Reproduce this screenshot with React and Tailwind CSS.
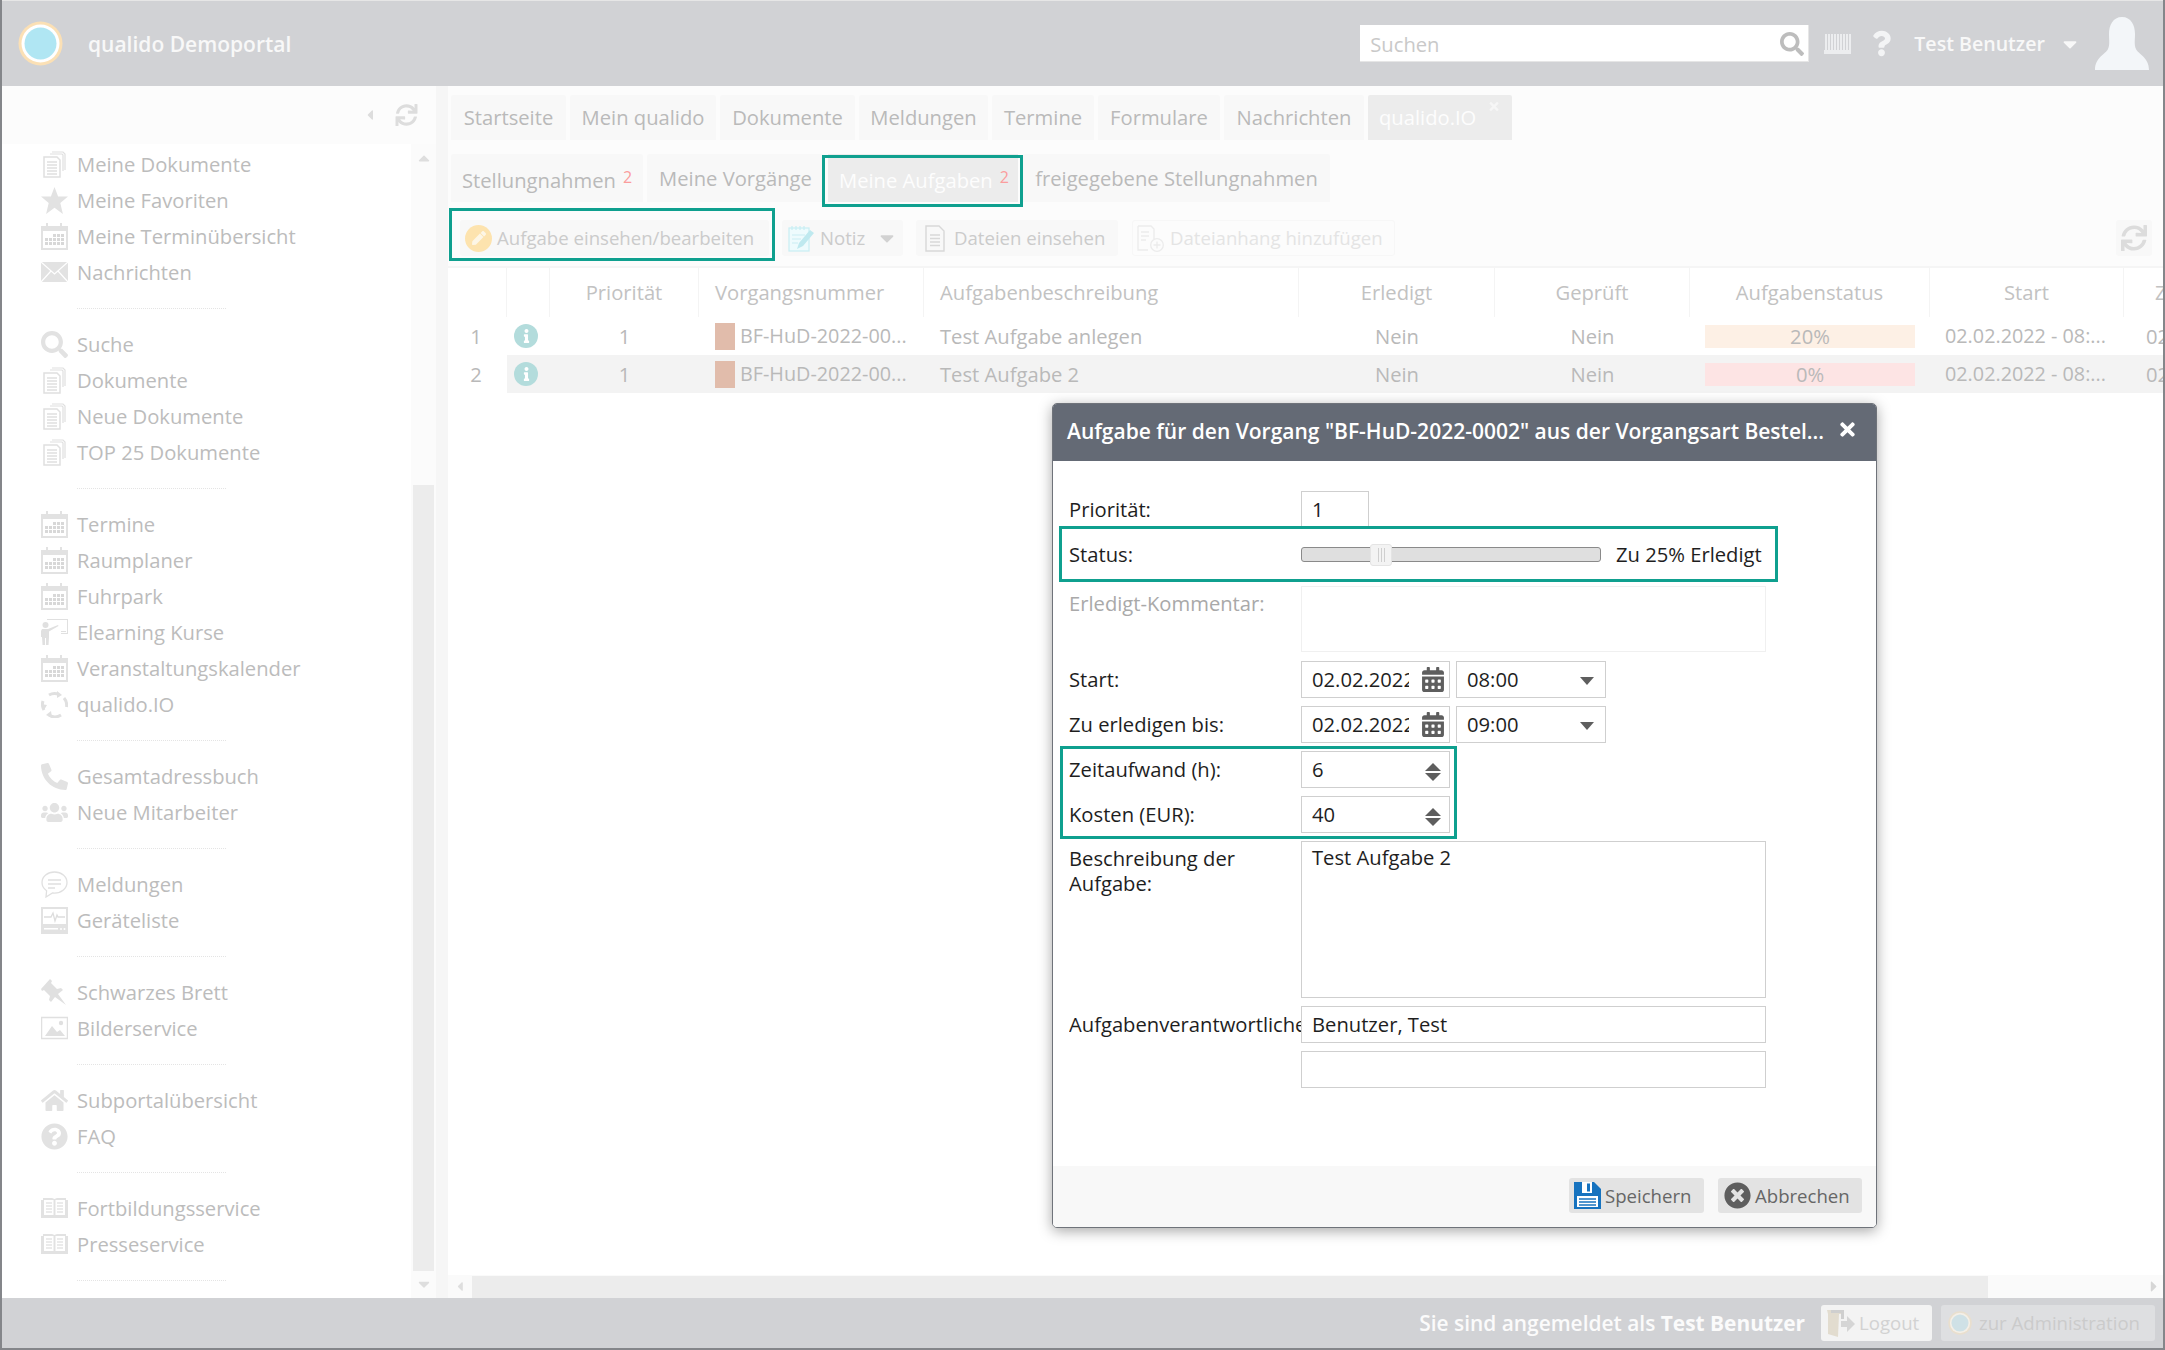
import React from 'react';
import { FaSearch, FaPhone, FaUsers, FaHome, FaQuestionCircle, FaSync, FaTimes, FaCaretDown, FaCaretUp, FaCaretLeft, FaCaretRight, FaTimesCircle, FaQuestion, FaInfo, FaPen, FaCalendarAlt } from 'react-icons/fa';

const DocIcon = () => (
  <svg viewBox="0 0 27 27" className="w-[27px] h-[27px]" fill="none" stroke="#e0e0e0" strokeWidth="1.2">
    <path d="M9 3h12l1 1v16M11 1h11l2 2v16" />
    <path d="M3 6h13l3 3v17H3z" fill="#fff" strokeWidth="1.5" />
    <path d="M6 11h10M6 14h10M6 17h10M6 20h10M6 23h10" strokeWidth="1.3" />
  </svg>
);
const StarIcon = () => (
  <svg viewBox="0 0 27 27" className="w-[27px] h-[27px]" fill="#e2e2e2">
    <path d="M13.5 0l3.6 9.6H27l-7.7 6.4 2.6 11-8.4-6.3L5.1 27l2.6-11L0 9.6h9.9z" />
  </svg>
);
const CalIcon = () => (
  <svg viewBox="0 0 27 27" className="w-[27px] h-[27px]">
    <path d="M0 3h5V0h2v3h12V0h2v3h6v24H0z" fill="#e2e2e2" />
    <rect x="2" y="8" width="23" height="17" fill="#fff" />
    {[0, 1, 2].map((r) => [0, 1, 2, 3, 4].map((k) => (k > 1 || r > 0) && <rect key={r + '-' + k} x={4 + k * 4} y={11 + r * 4} width="3" height="3" fill="#d8d8d8" />))}
  </svg>
);
const MailIcon = () => (
  <svg viewBox="0 0 27 27" className="w-[27px] h-[27px]">
    <rect y="3" width="27" height="20" fill="#e2e2e2" />
    <path d="M0 3l13.5 12L27 3M0 23l10-11M27 23L17 12" stroke="#fff" strokeWidth="1.2" fill="none" />
  </svg>
);
const TeachIcon = () => (
  <svg viewBox="0 0 27 27" className="w-[27px] h-[27px]" fill="#e0e0e0">
    <path d="M6 0h21v15h-7v-1h6V1H6z" />
    <circle cx="4.5" cy="6" r="3" />
    <path d="M1 10h6l10-4 .5 1L8 12.5V18l-.5 8H5v-7H4v7H1.5L1 18H0v-6z" />
    <rect x="20" y="12" width="5" height="1" />
  </svg>
);
const LoopIcon = () => (
  <svg viewBox="0 0 27 27" className="w-[27px] h-[27px]" fill="none" stroke="#e0e0e0" strokeWidth="3">
    <path d="M8 4a11 11 0 0 1 10-.5" />
    <path d="M23 7a11 11 0 0 1 2.5 9" />
    <path d="M20 24a11 11 0 0 1-12 0" />
    <path d="M3 19a11 11 0 0 1-1-9" />
    <path d="M16 0l5 4-5 3z" fill="#e0e0e0" stroke="none" />
    <path d="M11 27l-6-3 5-4z" fill="#e0e0e0" stroke="none" />
    <path d="M0 13l3 6 3-5z" fill="#e0e0e0" stroke="none" />
  </svg>
);
const BubbleIcon = () => (
  <svg viewBox="0 0 27 27" className="w-[27px] h-[27px]" fill="none" stroke="#e0e0e0" strokeWidth="1.3">
    <path d="M13.5 1C6.5 1 1 5.6 1 11.5c0 3.4 1.8 6.3 4.6 8.2L5 26l6.5-4c.7.1 1.3.1 2 .1C20.5 22 26 17.4 26 11.5S20.5 1 13.5 1z" />
    <path d="M7 9h13M7 13h13M7 17h7" strokeWidth="1.6" />
  </svg>
);
const DeviceIcon = () => (
  <svg viewBox="0 0 27 27" className="w-[27px] h-[27px]">
    <path d="M0 0h27v27H0z" fill="#e2e2e2" />
    <rect x="2" y="2" width="23" height="15" fill="#fff" />
    <path d="M3 10h7l2-4 2 8 2-6 1 2h7" stroke="#ddd" strokeWidth="1.3" fill="none" />
    <rect x="3" y="21" width="14" height="1.5" fill="#fff" />
    <circle cx="20" cy="22" r="1" fill="#fff" />
    <circle cx="23.5" cy="22" r="1" fill="#fff" />
  </svg>
);
const ImageIcon = () => (
  <svg viewBox="0 0 27 27" className="w-[27px] h-[27px]">
    <rect x="0.5" y="2.5" width="26" height="21" fill="#fff" stroke="#e0e0e0" strokeWidth="1.5" />
    <path d="M4 21l7-10 5 6 3-2 5 6z" fill="#e0e0e0" />
    <circle cx="20" cy="8" r="2.2" fill="#e0e0e0" />
  </svg>
);
const BookIcon = () => (
  <svg viewBox="0 0 27 27" className="w-[27px] h-[27px]">
    <path d="M0 5h2V3h9l2.5 1L16 3h9v2h2v18H0z" fill="#e2e2e2" />
    <rect x="3" y="5" width="9.5" height="15" fill="#fff" />
    <rect x="14.5" y="5" width="9.5" height="15" fill="#fff" />
    <path d="M5 8h6M5 11h6M5 14h6M5 17h6M16 8h6M16 11h6M16 14h6M16 17h6" stroke="#d8d8d8" strokeWidth="1.2" />
  </svg>
);
const PinIcon = () => (
  <svg viewBox="0 0 27 27" className="w-[27px] h-[27px]" fill="#e0e0e0">
    <path d="M9 0l2 2-1 2 6 6 4-1 2 2-5 4 8 11-11-8-4 5-2-2 1-4-6-6-2 1-1-2z" />
  </svg>
);
const fa = (I, cls = '') => () => <I className={'w-[27px] h-[27px] text-[#e2e2e2] ' + cls} />;
const Icons = {
  doc: DocIcon, cal: CalIcon, mail: MailIcon, teach: TeachIcon, loop: LoopIcon, bubble: BubbleIcon, device: DeviceIcon, image: ImageIcon, book: BookIcon, pin: PinIcon, star: StarIcon,
  search: fa(FaSearch), phone: fa(FaPhone, '-scale-x-100'), users: fa(FaUsers), home: fa(FaHome), faq: fa(FaQuestionCircle),
};

const groups = [
  [['doc', 'Meine Dokumente'], ['star', 'Meine Favoriten'], ['cal', 'Meine Terminübersicht'], ['mail', 'Nachrichten']],
  [['search', 'Suche'], ['doc', 'Dokumente'], ['doc', 'Neue Dokumente'], ['doc', 'TOP 25 Dokumente']],
  [['cal', 'Termine'], ['cal', 'Raumplaner'], ['cal', 'Fuhrpark'], ['teach', 'Elearning Kurse'], ['cal', 'Veranstaltungskalender'], ['loop', 'qualido.IO']],
  [['phone', 'Gesamtadressbuch'], ['users', 'Neue Mitarbeiter']],
  [['bubble', 'Meldungen'], ['device', 'Geräteliste']],
  [['pin', 'Schwarzes Brett'], ['image', 'Bilderservice']],
  [['home', 'Subportalübersicht'], ['faq', 'FAQ']],
  [['book', 'Fortbildungsservice'], ['book', 'Presseservice']],
];

const Logo = ({ dim }) => (
  <svg viewBox="0 0 45 45" className={dim ? 'w-[24px] h-[24px]' : 'w-[45px] h-[45px]'}>
    <circle cx="22.5" cy="22.5" r="22" fill={dim ? '#e9dfce' : '#fbe0b5'} />
    <circle cx="22.5" cy="22.5" r="19" fill="#fff" opacity={dim ? 0.5 : 1} />
    <circle cx="22.5" cy="22.5" r="16" fill={dim ? '#cfe1e6' : '#b0e6f3'} />
  </svg>
);

const Sidebar = () => (
  <aside className="w-[434px] shrink-0 flex flex-col h-full overflow-hidden">
    <div className="h-[58px] shrink-0 bg-[#fcfcfc] flex items-center justify-end pr-[18px] gap-[20px]">
      <FaCaretLeft className="w-[10px] h-[16px] text-[#dddddd]" />
      <FaSync className="w-[23px] h-[22px] text-[#dddddd]" />
    </div>
    <div className="flex-1 flex min-h-0">
      <nav className="w-[409px] pt-[2px] bg-white overflow-hidden">
        {groups.map((g, i) => (
          <div key={i}>
            {g.map(([ic, t]) => {
              const I = Icons[ic];
              return (
                <div key={t} className="h-[36px] flex items-center pl-[39px]">
                  <span className="w-[27px] h-[27px] shrink-0 flex items-center justify-center"><I /></span>
                  <span className="ml-[9px] text-[#bcbcbc] whitespace-nowrap">{t}</span>
                </div>
              );
            })}
            <div className="h-[36px] flex items-center pl-[75px]">
              <div className="w-[149px] border-t border-dotted border-[#e4e4e4]" />
            </div>
          </div>
        ))}
      </nav>
      <div className="w-[25px] bg-[#fbfbfb] flex flex-col items-center">
        <div className="h-[341px] w-full pt-[5px] flex justify-center"><FaCaretUp className="w-[18px] h-[18px] text-[#dedede]" /></div>
        <div className="h-[786px] w-[21px] bg-[#ececec]" />
        <div className="flex-1 pt-[4px]"><FaCaretDown className="w-[18px] h-[18px] text-[#dedede]" /></div>
      </div>
    </div>
  </aside>
);

const Sup = ({ v }) => <sup className="text-[16px] text-[#fb9d9d] ml-[7px] relative -top-[3px] leading-none align-baseline">{v}</sup>;

const topTabs = [['Startseite', 115], ['Mein qualido', 146], ['Dokumente', 135], ['Meldungen', 129], ['Termine', 102], ['Formulare', 122], ['Nachrichten', 140]];

const Tabs = () => (
  <div className="h-[54px] pl-[3px] pt-[9px] flex gap-[4px] shrink-0">
    {topTabs.map(([t, w]) => (
      <div key={t} style={{ width: w }} className="h-[45px] bg-[#f8f8f8] rounded-t-[2px] flex items-center justify-center text-[#bababa] whitespace-nowrap">{t}</div>
    ))}
    <div className="relative h-[45px] w-[144px] bg-[#ececec] rounded-t-[2px] pl-[11px] flex items-center text-[#fdfdfd] whitespace-nowrap">
      qualido.IO
      <FaTimes className="absolute top-[5px] right-[11px] w-[14px] h-[13px] text-[#f6f6f6]" />
    </div>
  </div>
);

const SubTabs = () => (
  <div className="h-[48px] mt-[14px] pl-[3px] flex gap-[4px] shrink-0">
    <div className="h-[48px] w-[192px] bg-[#f8f8f8] rounded-t-[2px] pl-[11px] pt-[4px] flex items-center text-[#bababa] whitespace-nowrap">Stellungnahmen<Sup v="2" /></div>
    <div className="h-[48px] w-[177px] bg-[#f8f8f8] rounded-t-[2px] flex items-center justify-center text-[#bababa] whitespace-nowrap">Meine Vorgänge</div>
    <div className="h-[48px] w-[190px] bg-[#ececec] pl-[11px] pt-[4px] flex items-center text-[#fdfdfd] whitespace-nowrap">Meine Aufgaben<Sup v="2" /></div>
    <div className="h-[48px] w-[307px] ml-[1px] bg-[#f8f8f8] rounded-t-[2px] flex items-center justify-center text-[#bababa] whitespace-nowrap">freigegebene Stellungnahmen</div>
  </div>
);

const NoteIcon = () => (
  <svg viewBox="0 0 27 27" className="w-[27px] h-[27px]">
    <rect x="1" y="3" width="20" height="23" fill="#eefbfd" stroke="#c9eef3" strokeWidth="1.2" />
    <path d="M4 1v4M8 1v4M12 1v4M16 1v4" stroke="#c9eef3" strokeWidth="1.2" />
    <path d="M4 10h13M4 14h9M4 18h6" stroke="#c9eef3" strokeWidth="1.2" />
    <path d="M9 24l2-6L22 5l4 3L15 21z" fill="#bfe9ef" />
  </svg>
);
const FileIcon = () => (
  <svg viewBox="0 0 20 27" className="w-[20px] h-[27px]" fill="none" stroke="#d8d8d8" strokeWidth="1.4">
    <path d="M1 1h13l5 5v20H1z" />
    <path d="M5 10h10M5 13.5h10M5 17h10M5 20.5h10" />
  </svg>
);
const AttachIcon = () => (
  <svg viewBox="0 0 27 27" className="w-[27px] h-[27px]" fill="none" stroke="#ececec" strokeWidth="1.3">
    <path d="M1 1h13l3 3v10M11 25H1V1" />
    <path d="M4 7h8M4 11h8M4 15h5" />
    <circle cx="20" cy="20" r="6.3" />
    <path d="M20 16.5v7M16.5 20h7" />
  </svg>
);

const btn = 'h-[36px] rounded-[3px] flex items-center whitespace-nowrap shrink-0 text-[18.6px]';
const Toolbar = () => (
  <div className="h-[66px] shrink-0 border-b-2 border-[#f5f5f5] pl-[12px] pt-[18px] flex">
    <div className={btn + ' w-[309px] bg-[#f8f8f8] pl-[5px] text-[#cbcbcb]'}>
      <span className="w-[27px] h-[27px] rounded-full bg-[#fde3ae] flex items-center justify-center"><FaPen className="w-[14px] h-[14px] text-[#fdf6e6]" /></span>
      <span className="ml-[5px]">Aufgabe einsehen/bearbeiten</span>
    </div>
    <div className={btn + ' w-[121px] ml-[13px] bg-[#f8f8f8] pl-[6px] text-[#cbcbcb]'}>
      <NoteIcon />
      <span className="ml-[5px]">Notiz</span>
      <FaCaretDown className="ml-[11px] w-[22px] h-[22px] text-[#d2d2d2]" />
    </div>
    <div className={btn + ' w-[202px] ml-[13px] bg-[#f8f8f8] pl-[9px] text-[#cbcbcb]'}>
      <FileIcon />
      <span className="ml-[9px]">Dateien einsehen</span>
    </div>
    <div className={btn + ' w-[263px] ml-[14px] border border-[#f7f7f7] pl-[4px] text-[#e4e4e4]'}>
      <AttachIcon />
      <span className="ml-[6px]">Dateianhang hinzufügen</span>
    </div>
    <div className={btn + ' w-[36px] ml-auto mr-[11px] bg-[#f8f8f8] justify-center'}>
      <FaSync className="w-[26px] h-[26px] text-[#dcdcdc]" />
    </div>
  </div>
);

const gridCols = 'grid grid-cols-[59px_43px_149px_225px_375px_196px_195px_240px_194px_39px]';
const heads = ['', '', 'Priorität', 'Vorgangsnummer', 'Aufgabenbeschreibung', 'Erledigt', 'Geprüft', 'Aufgabenstatus', 'Start'];

const Table = () => (
  <div className="bg-white shrink-0">
    <div className={gridCols + ' h-[49px] text-[#c2c2c2]'}>
      {heads.map((h, i) => (
        <div key={i} className={'flex items-center border-r border-[#f4f4f4] ' + (i === 3 || i === 4 ? 'pl-[16px]' : 'justify-center')}>{h}</div>
      ))}
      <div className="flex items-center pl-[31px] overflow-hidden">Z</div>
    </div>
    {[
      ['1', 'Test Aufgabe anlegen', '20%', 'bg-[#fdf0e5]', 'bg-white'],
      ['2', 'Test Aufgabe 2', '0%', 'bg-[#fde4e4]', 'bg-[#f3f3f3]'],
    ].map(([n, d, p, pc, bg]) => (
      <div key={n} className={gridCols + ' h-[38px] text-[#b9b9b9] whitespace-nowrap'}>
        <div className="flex items-center justify-center pr-[3px] bg-white">{n}</div>
        <div className={bg + ' flex items-center pl-[7px]'}>
          <span className="w-[24px] h-[24px] rounded-full bg-[#b3dcdc] flex items-center justify-center"><FaInfo className="w-[13px] h-[14px] text-white" /></span>
        </div>
        <div className={bg + ' flex items-center justify-center'}>1</div>
        <div className={bg + ' flex items-center pl-[16px] overflow-hidden'}>
          <span className="w-[20px] h-[27px] bg-[#e1bcab] shrink-0" />
          <span className="ml-[5px] text-[19.8px]">BF-HuD-2022-00...</span>
        </div>
        <div className={bg + ' flex items-center pl-[16px]'}>{d}</div>
        <div className={bg + ' flex items-center justify-center'}>Nein</div>
        <div className={bg + ' flex items-center justify-center'}>Nein</div>
        <div className={bg + ' flex items-center px-[15px]'}>
          <div className={pc + ' w-full h-[23px] flex items-center justify-center'}>{p}</div>
        </div>
        <div className={bg + ' flex items-center pl-[15px] text-[19.8px]'}>02.02.2022 - 08:...</div>
        <div className={bg + ' flex items-center pl-[22px] overflow-hidden'}>02</div>
      </div>
    ))}
  </div>
);

const Field = ({ label, muted, top, cls = 'h-[37px]', children }) => (
  <div className={'flex ' + cls}>
    <div className={'w-[232px] shrink-0 overflow-hidden ' + (top ? 'pt-[5px] leading-[25px] ' : 'whitespace-nowrap flex items-center ') + (muted ? 'text-[#a9a9a9]' : 'text-[#1e1e1e]')}>{label}</div>
    {children}
  </div>
);
const box = 'h-full border border-[#cfcfcf] bg-white flex items-center text-[#1e1e1e] pl-[10px] whitespace-nowrap';

const DateBox = ({ value }) => (
  <div className={box + ' w-[149px] relative'}>
    <span className="w-[97px] overflow-hidden">{value}</span>
    <FaCalendarAlt className="absolute left-[120px] top-[5px] w-[22px] h-[25px] text-[#5e5e5e]" />
  </div>
);
const TimeBox = ({ value }) => (
  <div className={box + ' w-[150px] ml-[6px] relative'}>
    {value}
    <span className="absolute right-[11px] top-[15px] w-0 h-0 border-x-[7px] border-x-transparent border-t-[8px] border-t-[#5e5e5e]" />
  </div>
);
const SpinBox = ({ value }) => (
  <div className={box + ' w-[149px] relative'}>
    {value}
    <span className="absolute left-[123px] top-[11px] w-0 h-0 border-x-[8px] border-x-transparent border-b-[8px] border-b-[#5e5e5e]" />
    <span className="absolute left-[123px] top-[21px] w-0 h-0 border-x-[8px] border-x-transparent border-t-[8px] border-t-[#5e5e5e]" />
  </div>
);

const Floppy = () => (
  <svg viewBox="0 0 27 27" className="w-[27px] h-[27px]">
    <path d="M0 0h20l7 7v20H0z" fill="#1773bf" />
    <rect x="8" y="0" width="10" height="11" fill="#fff" />
    <rect x="13" y="1.5" width="3" height="8" fill="#1773bf" />
    <rect x="3" y="14" width="21" height="11" fill="#fff" />
    <path d="M5 17h17M5 20h17M5 23h17" stroke="#1773bf" strokeWidth="1.4" />
  </svg>
);

const Modal = () => (
  <div className="absolute left-[1050px] top-[403px] w-[825px] h-[825px] bg-white border border-[#6f737a] rounded-[5px] overflow-hidden shadow-[0_3px_14px_rgba(0,0,0,0.35)] flex flex-col">
    <div className="h-[57px] shrink-0 bg-[#646a75] pl-[14px] pr-[19px] flex items-center justify-between whitespace-nowrap text-white text-[21px] font-semibold">
      <span className="pb-[2px]">Aufgabe für den Vorgang "BF-HuD-2022-0002" aus der Vorgangsart Bestel...</span>
      <FaTimes className="w-[19px] h-[21px] text-white mb-[7px]" />
    </div>
    <div className="pl-[16px] pt-[30px] flex flex-col">
      <Field label="Priorität:">
        <div className={box + ' w-[68px]'}>1</div>
      </Field>
      <div className="mt-[8px] h-[36px] flex items-center">
        <div className="w-[232px] shrink-0 text-[#1e1e1e]">Status:</div>
        <div className="relative w-[300px] h-[15px] bg-[#dfdfdf] border border-[#8a8a8a] rounded-[3px]">
          <div className="absolute left-[68px] -top-[4px] w-[22px] h-[22px] bg-[#f3f3f3] border border-[#e4e4e4] rounded-[3px] flex justify-center gap-[2px] py-[3px]">
            <span className="w-[1px] bg-[#cfcfcf]" /><span className="w-[1px] bg-[#cfcfcf]" /><span className="w-[1px] bg-[#cfcfcf]" />
          </div>
        </div>
        <div className="ml-[15px] text-[#1e1e1e] whitespace-nowrap">Zu 25% Erledigt</div>
      </div>
      <Field label="Erledigt-Kommentar:" muted top cls="mt-[14px] h-[66px]">
        <div className="w-[465px] h-full border border-[#f0f0f0]" />
      </Field>
      <Field label="Start:" cls="mt-[9px] h-[37px]"><DateBox value="02.02.2022" /><TimeBox value="08:00" /></Field>
      <Field label="Zu erledigen bis:" cls="mt-[8px] h-[37px]"><DateBox value="02.02.2022" /><TimeBox value="09:00" /></Field>
      <Field label="Zeitaufwand (h):" cls="mt-[8px] h-[37px]"><SpinBox value="6" /></Field>
      <Field label="Kosten (EUR):" cls="mt-[8px] h-[37px]"><SpinBox value="40" /></Field>
      <Field label={<>Beschreibung der<br />Aufgabe:</>} top cls="mt-[8px] h-[157px]">
        <div className="w-[465px] h-full border border-[#cfcfcf] pl-[10px] text-[#1e1e1e]">Test Aufgabe 2</div>
      </Field>
      <Field label="Aufgabenverantwortliche:" cls="mt-[8px] h-[37px]">
        <div className={box + ' w-[465px]'}>Benutzer, Test</div>
      </Field>
      <div className="mt-[8px] ml-[232px] w-[465px] h-[37px] border border-[#cfcfcf]" />
    </div>
    <div className="mt-auto h-[61px] shrink-0 bg-[#f8f8f8] flex items-start justify-end pt-[12px] pr-[14px] gap-[14px] text-[18.6px]">
      <div className="w-[135px] h-[35px] bg-[#e3e3e3] rounded-[3px] flex items-center pl-[5px] text-[#666]">
        <Floppy /><span className="ml-[4px]">Speichern</span>
      </div>
      <div className="w-[144px] h-[35px] bg-[#e3e3e3] rounded-[3px] flex items-center pl-[6px] text-[#666]">
        <FaTimesCircle className="w-[27px] h-[27px] text-[#5e5e5e]" /><span className="ml-[4px]">Abbrechen</span>
      </div>
    </div>
  </div>
);

const Avatar = () => (
  <svg viewBox="0 0 54 53" className="w-[54px] h-[53px]">
    <path d="M27 0c9 0 13 8 13 17 0 6-1 11 1 15 2 5 13 8 13 21H0c0-13 11-16 13-21 2-4 1-9 1-15C14 8 18 0 27 0z" fill="#f3f6f9" />
  </svg>
);
const Barcode = () => (
  <svg viewBox="0 0 27 20" className="w-[27px] h-[20px]">
    <rect width="27" height="20" fill="#ecedef" />
    {Array.from({ length: 14 }).map((_, i) => <rect key={i} x={i * 2 + (i % 3)} y="0" width="1" height="16" fill="#d1d2d5" />)}
  </svg>
);
const DoorIcon = () => (
  <svg viewBox="0 0 28 27" className="w-[28px] h-[27px]">
    <path d="M0 0h16v4H12L11 27 1 24V4z" fill="#e2dccf" />
    <path d="M4 0h13v9h-3V3H4z" fill="#cfcfcf" />
    <path d="M14 11h6V6l8 8-8 8v-5h-6z" fill="#d5d5d5" />
  </svg>
);

export default function App() {
  return (
    <div className="relative w-[2165px] h-[1350px] overflow-hidden bg-white font-['Open_Sans',sans-serif] text-[20.2px] leading-normal border-l-2 border-r-2 border-b-2 border-[#84868a] flex flex-col">
      <header className="h-[86px] shrink-0 bg-[#d1d2d5] border-t border-[#e6e6e6] flex items-center pl-[16px] pr-[14px] text-[#f8f8f8]">
        <Logo />
        <span className="ml-[25px] mt-[2px] text-[21px] font-semibold whitespace-nowrap">qualido Demoportal</span>
        <div className="ml-auto w-[449px] h-[37px] bg-white border-r border-b border-[#e6e6e6] pl-[10px] pt-[2px] flex items-center justify-between pr-[4px] text-[#c9c9c9]">
          Suchen
          <FaSearch className="w-[24px] h-[24px] text-[#bdbdbd]" />
        </div>
        <span className="ml-[15px]"><Barcode /></span>
        <FaQuestion className="ml-[21px] w-[19px] h-[27px] text-[#f3f4f5]" />
        <span className="ml-[23px] text-[19.6px] font-semibold whitespace-nowrap">Test Benutzer</span>
        <FaCaretDown className="ml-[14px] w-[22px] h-[22px] text-[#f8f8f8]" />
        <span className="ml-[14px]"><Avatar /></span>
      </header>
      <div className="flex-1 flex min-h-0">
        <Sidebar />
        <div className="w-[12px] shrink-0 bg-[#f6f6f6]" />
        <main className="flex-1 min-w-0 flex flex-col bg-[#fcfcfc]">
          <Tabs />
          <SubTabs />
          <Toolbar />
          <Table />
          <div className="flex-1 bg-white" />
          <div className="h-[23px] shrink-0 bg-[#fafafa] flex items-center">
            <FaCaretLeft className="ml-[6px] w-[12px] h-[15px] text-[#dedede]" />
            <div className="ml-[6px] w-[1516px] h-[22px] bg-[#ececec]" />
            <FaCaretRight className="ml-auto mr-[3px] w-[12px] h-[17px] text-[#d6d6d6]" />
          </div>
        </main>
      </div>
      <footer className="h-[50px] shrink-0 bg-[#d1d2d5] flex items-center justify-end pr-[8px] text-[#fbfbfb] text-[20.9px] font-semibold whitespace-nowrap">
        <span className="mt-[2px]">Sie sind angemeldet als <b className="font-bold">Test Benutzer</b></span>
        <div className="ml-[16px] w-[111px] h-[36px] bg-[#f3f3f3] rounded-[3px] flex items-center pl-[6px] text-[#d2d2d2] text-[18.6px] font-normal"><DoorIcon /><span className="ml-[4px]">Logout</span></div>
        <div className="ml-[9px] w-[214px] h-[36px] bg-[#dedfe1] rounded-[3px] flex items-center pl-[7px] text-[#cbcbcb] text-[18.6px] font-normal"><Logo dim /><span className="ml-[7px]">zur Administration</span></div>
      </footer>

      <Modal />

      {/* teal annotation frames drawn over the screenshot */}
      <div className="absolute left-[447px] top-[208px] w-[326px] h-[53px] border-[3px] border-[#0fa08f] pointer-events-none" />
      <div className="absolute left-[820px] top-[155px] w-[201px] h-[52px] border-[3px] border-[#0fa08f] pointer-events-none" />
      <div className="absolute left-[1057px] top-[526px] w-[719px] h-[56px] border-[3px] border-[#0fa08f] pointer-events-none" />
      <div className="absolute left-[1058px] top-[746px] w-[397px] h-[93px] border-[3px] border-[#0fa08f] pointer-events-none" />
    </div>
  );
}
